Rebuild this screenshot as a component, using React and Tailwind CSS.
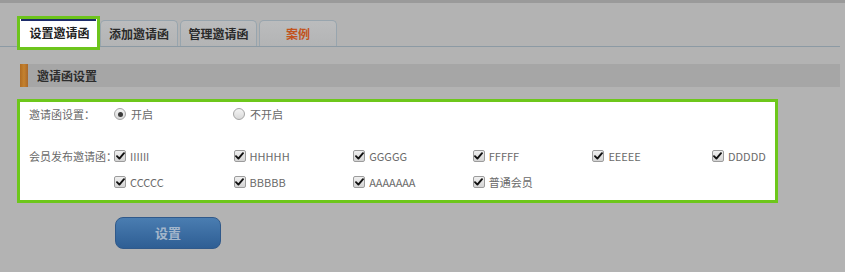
import React from "react";

const font = { fontFamily: '"Noto Sans CJK SC", "Noto Sans", sans-serif' };

function Radio({ checked, label }) {
  return (
    <div className="flex items-center w-[119px] shrink-0">
      <span className="w-[12px] h-[12px] rounded-full border border-[#a4a4a4] bg-gradient-to-b from-[#f4f4f4] to-[#d9d9d9] flex items-center justify-center">
        {checked && <span className="w-[5px] h-[5px] rounded-full bg-[#3a3a3a]" />}
      </span>
      <span className="ml-[5px] text-[11px] text-[#6a6a6a] leading-[14px] whitespace-nowrap">{label}</span>
    </div>
  );
}

function Check({ label }) {
  return (
    <div className="flex items-center w-[119.6px] shrink-0">
      <span className="w-[12px] h-[12px] rounded-[2px] border border-[#9c9c9c] bg-gradient-to-b from-[#f0f0f0] to-[#d4d4d4] flex items-center justify-center">
        <svg width="9" height="8" viewBox="0 0 9 8">
          <path d="M1 4.2 L3.4 6.6 L8 1.2" fill="none" stroke="#111" strokeWidth="1.9" strokeLinecap="round" strokeLinejoin="round" />
        </svg>
      </span>
      <span className="ml-[4px] text-[11px] text-[#6a6a6a] leading-[14px] whitespace-nowrap">{label}</span>
    </div>
  );
}

export default function App() {
  return (
    <div className="w-[845px] h-[272px] bg-[#b3b3b3] border-t-[3px] border-[#9a9a9a] overflow-hidden" style={font}>
      <div className="flex items-end h-[44px] border-b border-[#8c9aa4] mr-[5px] pl-[17px]">
        <div className="-mb-[4px] w-[83px] h-[34px] border-[3px] border-[#6dc41c] bg-white flex flex-col">
          <div className="h-[2px] bg-[#1d2c6a] mx-[1px]" />
          <div className="flex-1 flex items-center justify-center text-[12px] font-bold text-[#222] pb-[3px] pl-[2px]">设置邀请函</div>
        </div>
        <div className="w-[78px] h-[26px] border border-b-0 border-[#98a5ae] rounded-t-[5px] bg-gradient-to-b from-[#bbbcbd] to-[#b3b4b5] flex items-center justify-center text-[12px] font-bold text-[#2a2a2a]">添加邀请函</div>
        <div className="ml-[2px] w-[77px] h-[26px] border border-b-0 border-[#98a5ae] rounded-t-[5px] bg-gradient-to-b from-[#bbbcbd] to-[#b3b4b5] flex items-center justify-center text-[12px] font-bold text-[#2a2a2a]">管理邀请函</div>
        <div className="ml-[2px] w-[78px] h-[26px] border border-b-0 border-[#98a5ae] rounded-t-[5px] bg-gradient-to-b from-[#bbbcbd] to-[#b3b4b5] flex items-center justify-center text-[12px] font-bold text-[#c2531c]">案例</div>
      </div>

      <div className="mt-[17px] ml-[20px] mr-[5px] h-[23px] bg-[#a6a6a6] flex items-center">
        <div className="w-[8px] h-full bg-gradient-to-r from-[#b06c22] via-[#c4822f] to-[#a9682a]" />
        <div className="ml-[9px] text-[12px] font-bold text-[#2d2d2d]">邀请函设置</div>
      </div>

      <div className="mt-[12px] ml-[17px] w-[761px] h-[104px] border-[3px] border-[#6dc71b] bg-white pl-[9px] pt-[5px]">
        <div className="flex items-center h-[14px]">
          <div className="w-[85px] shrink-0 text-[11px] text-[#6a6a6a] whitespace-nowrap">邀请函设置：</div>
          <Radio checked label="开启" />
          <Radio label="不开启" />
        </div>
        <div className="flex items-start mt-[28px]">
          <div className="w-[85px] shrink-0 text-[11px] text-[#6a6a6a] leading-[14px] whitespace-nowrap">会员发布邀请函：</div>
          <div className="flex flex-col gap-[12px]">
            <div className="flex h-[14px] items-center">
              <Check label="IIIIII" />
              <Check label="HHHHH" />
              <Check label="GGGGG" />
              <Check label="FFFFF" />
              <Check label="EEEEE" />
              <Check label="DDDDD" />
            </div>
            <div className="flex h-[14px] items-center">
              <Check label="CCCCC" />
              <Check label="BBBBB" />
              <Check label="AAAAAAA" />
              <Check label="普通会员" />
            </div>
          </div>
        </div>
      </div>

      <div className="mt-[14px] ml-[115px] w-[106px] h-[32px] rounded-[8px] border border-[#30598a] bg-gradient-to-b from-[#4a7db1] to-[#2e5e94] flex items-center justify-center text-[13px] font-bold text-[#a3b6cb]">
        设置
      </div>
    </div>
  );
}
